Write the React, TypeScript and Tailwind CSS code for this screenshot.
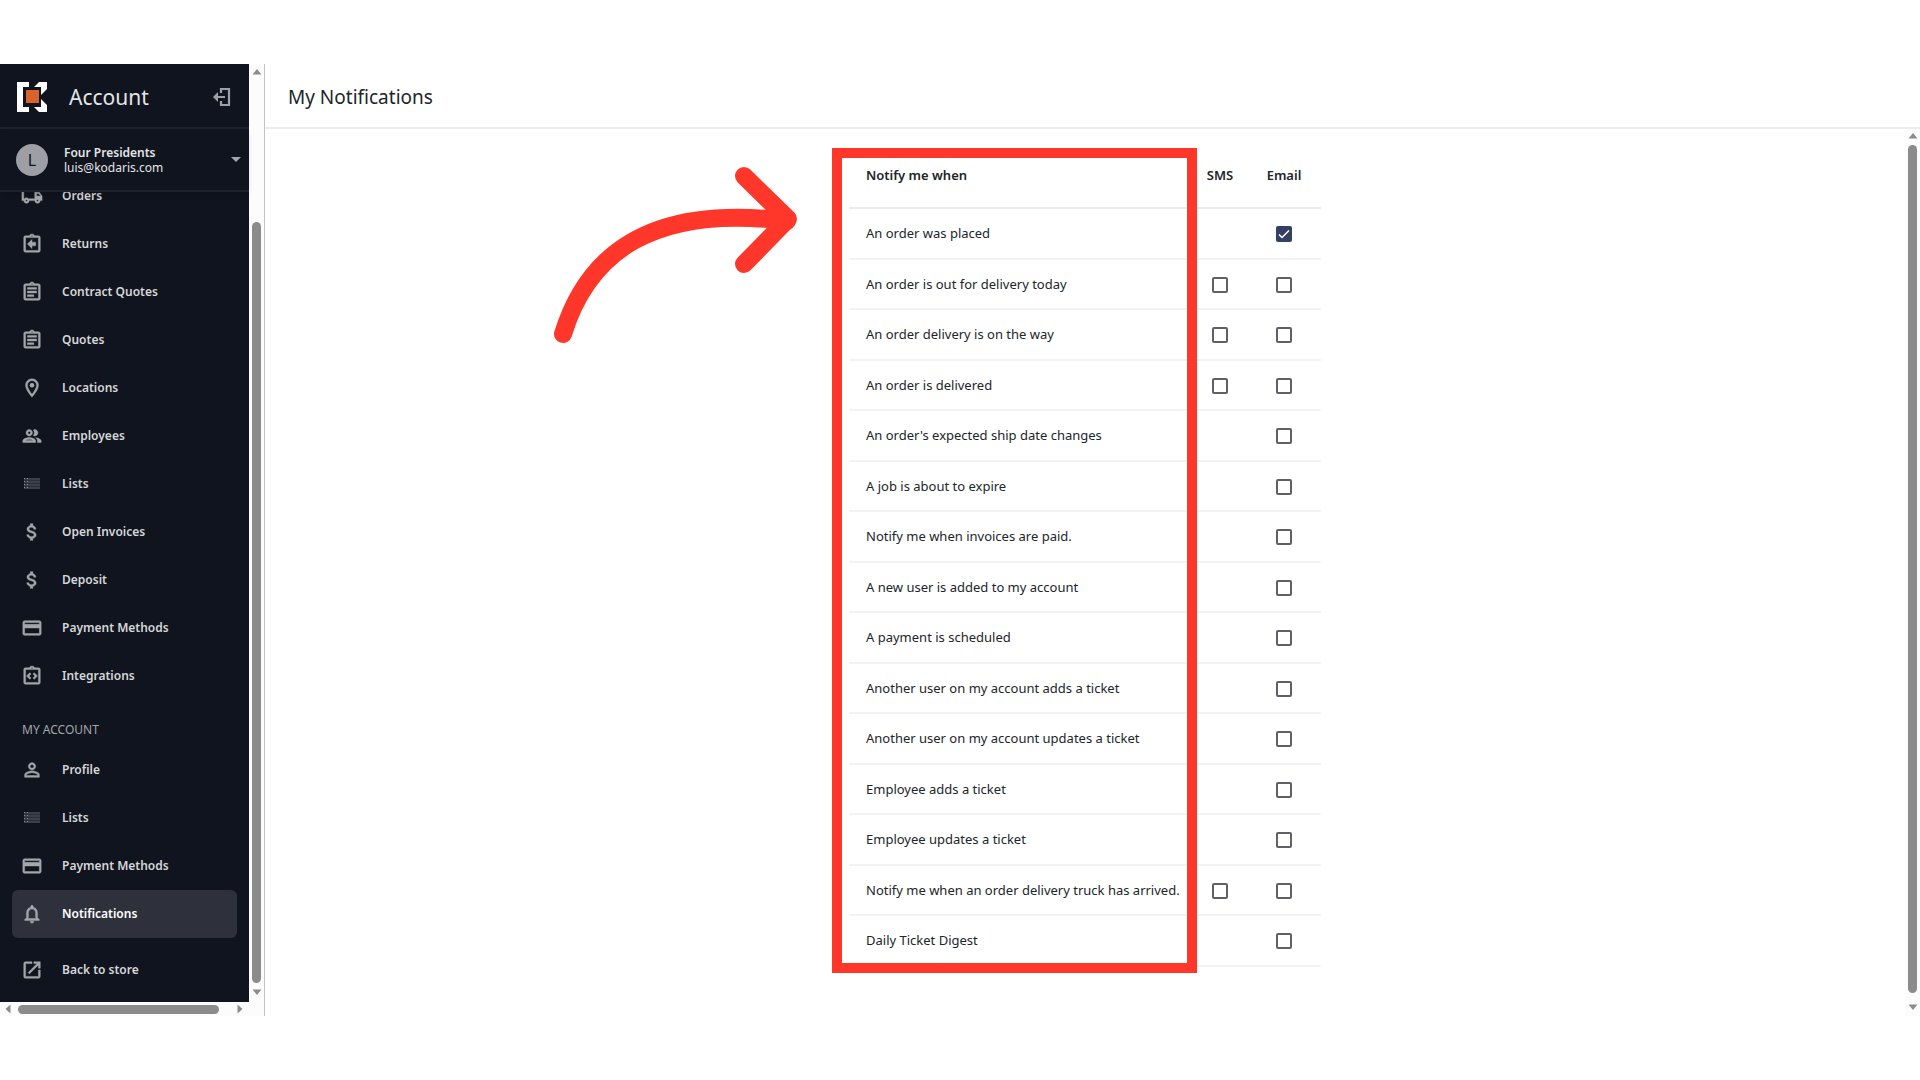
import type { IconType } from 'react-icons';
import {
  MdAttachMoney,
  MdCreditCard,
  MdNotificationsNone,
  MdOpenInNew,
  MdOutlineAssignment,
  MdOutlineAssignmentReturn,
  MdOutlineGroup,
  MdOutlineIntegrationInstructions,
  MdOutlineLocalShipping,
  MdOutlineLocationOn,
  MdPersonOutline,
} from 'react-icons/md';

type NavItem = { label: string; icon: IconType; active?: boolean };

function ListIcon({ className }: { className?: string }) {
  return (
    <svg viewBox="0 0 22 22" className={className} aria-hidden="true">
      <rect x="3" y="5" width="16" height="11" fill="#2a2f3a" />
      <path d="M3 6h16M3 9h16M3 12h16M3 15h16" fill="none" stroke="#4c515b" strokeWidth="1" />
      <path d="M3.5 5v11M6.5 5v11" fill="none" stroke="#8a8f96" strokeWidth="1" strokeDasharray="1 2" />
    </svg>
  );
}

const accountItems: NavItem[] = [
  { label: 'Orders', icon: MdOutlineLocalShipping },
  { label: 'Returns', icon: MdOutlineAssignmentReturn },
  { label: 'Contract Quotes', icon: MdOutlineAssignment },
  { label: 'Quotes', icon: MdOutlineAssignment },
  { label: 'Locations', icon: MdOutlineLocationOn },
  { label: 'Employees', icon: MdOutlineGroup },
  { label: 'Lists', icon: ListIcon as IconType },
  { label: 'Open Invoices', icon: MdAttachMoney },
  { label: 'Deposit', icon: MdAttachMoney },
  { label: 'Payment Methods', icon: MdCreditCard },
  { label: 'Integrations', icon: MdOutlineIntegrationInstructions },
];

const myAccountItems: NavItem[] = [
  { label: 'Profile', icon: MdPersonOutline },
  { label: 'Lists', icon: ListIcon as IconType },
  { label: 'Payment Methods', icon: MdCreditCard },
  { label: 'Notifications', icon: MdNotificationsNone, active: true },
];

const notifications = [
  { label: 'An order was placed', sms: false, email: true },
  { label: 'An order is out for delivery today', sms: true },
  { label: 'An order delivery is on the way', sms: true },
  { label: 'An order is delivered', sms: true },
  { label: "An order's expected ship date changes" },
  { label: 'A job is about to expire' },
  { label: 'Notify me when invoices are paid.' },
  { label: 'A new user is added to my account' },
  { label: 'A payment is scheduled' },
  { label: 'Another user on my account adds a ticket' },
  { label: 'Another user on my account updates a ticket' },
  { label: 'Employee adds a ticket' },
  { label: 'Employee updates a ticket' },
  { label: 'Notify me when an order delivery truck has arrived.', sms: true },
  { label: 'Daily Ticket Digest' },
];

function NavLink({ item }: { item: NavItem }) {
  const Icon = item.icon;
  return (
    <li>
      <a
        href="#"
        className={`flex h-12 items-center rounded-md pl-[9px] text-xs font-semibold ${
          item.active ? 'bg-[#2e313c] text-white' : 'text-[#d5d6d8]'
        }`}
      >
        <Icon className="mr-[19px] h-[22px] w-[22px] text-[#a3a6ab] [&_path:not([fill=none])]:[stroke-width:0.5]" />
        {item.label}
      </a>
    </li>
  );
}

function Checkbox({ labelledBy, checked }: { labelledBy: string; checked?: boolean }) {
  return (
    <span className="relative mx-auto block h-4 w-4">
      <input
        type="checkbox"
        aria-labelledby={labelledBy}
        defaultChecked={checked}
        className="peer block h-4 w-4 appearance-none rounded-xs border-2 border-[#5f6166] checked:border-[#334062] checked:bg-[#334062]"
      />
      <svg viewBox="0 0 16 16" className="pointer-events-none absolute inset-0 hidden h-4 w-4 peer-checked:block" aria-hidden="true">
        <path d="M3 8.5l3 3L13 4.500" fill="none" stroke="#fff" strokeWidth="1.5" />
      </svg>
    </span>
  );
}

function Arrow({ d }: { d: string }) {
  return (
    <svg viewBox="0 0 10 10" className="h-[10px] w-[10px] shrink-0" aria-hidden="true">
      <path d={d} fill="#8b8b8b" />
    </svg>
  );
}

const UP = 'M5 2l4.500 5.500h-9z';
const DOWN = 'M5 8l4.500-5.500h-9z';
const LEFT = 'M2.500 5l5-4.500v9z';
const RIGHT = 'M7.500 5l-5-4.500v9z';

export default function App() {
  return (
    <div className="bg-white py-16 font-['Noto_Sans',sans-serif] text-[#212529]">
      <div className="flex">
        {/* Sidebar */}
        <div className="w-[249px] shrink-0">
          <aside className="bg-[#10141e]">
            <div className="flex h-[65px] items-center border-b-2 border-[#1e222c] pl-[17px] pr-[18px] pt-0.5">
              <svg viewBox="0 0 30 30" className="h-[30px] w-[30px]" aria-hidden="true">
                <path d="M0 0h12v5H6v20h6v5H0zM17 5l5-5h8v7l-6 6v-8zM24 17l6 6v7h-8l-5-5h7z" fill="#fff" />
                <rect x="9" y="8" width="13" height="13" fill="#d9632d" />
              </svg>
              <h2 className="ml-[22px] flex-1 pt-0.5 text-[21px] text-[#e3e4e6]">Account</h2>
              <button type="button" aria-label="Sign out">
                <svg viewBox="0 0 18 18" className="h-[18px] w-[18px]" aria-hidden="true">
                  <path d="M8 5V1h8v16H8v-4M12 9H4" fill="none" stroke="#9da0a6" strokeWidth="2.2" />
                  <path d="M0 9l5-5v10z" fill="#9da0a6" />
                </svg>
              </button>
            </div>
            <button
              type="button"
              className="relative flex h-[63px] w-full items-center border-b-2 border-[#1e222c] pl-4 pr-2 text-left shadow-md"
            >
              <span className="flex h-8 w-8 items-center justify-center rounded-full bg-[#9e9ea5] text-base text-[#10141e]">L</span>
              <span className="ml-4 flex-1 text-xs leading-[15px] text-[#e3e4e6]">
                <span className="block font-semibold">Four Presidents</span>
                <span className="block">luis@kodaris.com</span>
              </span>
              <svg viewBox="0 0 10 5" className="h-[5px] w-[10px]" aria-hidden="true">
                <path d="M0 0h10L5 5z" fill="#a3a6ab" />
              </svg>
            </button>
            <nav className="overflow-hidden px-3 pb-2">
              <ul className="-mt-5">
                {accountItems.map((item) => (
                  <NavLink key={item.label} item={item} />
                ))}
              </ul>
              <h3 className="px-[10px] pb-1.5 pt-5 text-xs leading-5 text-[#a3a6ab]">MY ACCOUNT</h3>
              <ul>
                {myAccountItems.map((item) => (
                  <NavLink key={item.label} item={item} />
                ))}
              </ul>
              <ul className="mt-2">
                <NavLink item={{ label: 'Back to store', icon: MdOpenInNew }} />
              </ul>
            </nav>
          </aside>
          <div className="flex h-[14px] items-center bg-[#fcfcfc] pl-[3px] pr-1">
            <Arrow d={LEFT} />
            <div className="ml-[5px] mr-4 h-[9px] flex-1 rounded-full bg-[#8b8b8b]" />
            <Arrow d={RIGHT} />
          </div>
        </div>
        <div className="flex w-[15px] shrink-0 flex-col items-center bg-[#fcfcfc] pb-[19px] pt-[3px]">
          <Arrow d={UP} />
          <div className="mb-1 mt-[145px] w-[9px] flex-1 rounded-full bg-[#8b8b8b]" />
          <Arrow d={DOWN} />
        </div>

        {/* Content */}
        <main className="flex min-w-0 flex-1 flex-col border-l border-[#c4c4c4]">
          <header className="flex h-[65px] items-center border-b-2 border-[#ededed] pl-[23px] pt-1">
            <h1 className="text-[19px]">My Notifications</h1>
          </header>
          <div className="flex flex-1">
            <div className="flex-1 pt-[15px]">
              <div className="relative mx-auto w-[472px]">
                <table className="w-full table-fixed border-collapse text-[13px]">
                  <thead>
                    <tr className="h-16 border-b-2 border-[#ececec]">
                      <th className="pl-[17px] text-left font-semibold">Notify me when</th>
                      <th id="col-sms" className="w-16 text-center font-semibold">SMS</th>
                      <th id="col-email" className="w-[69px] pr-[5px] text-center font-semibold">Email</th>
                    </tr>
                  </thead>
                  <tbody>
                    {notifications.map((row, index) => (
                      <tr key={row.label} className="h-[50px] border-b-2 border-[#f3f3f3] odd:h-[51px]">
                        <td id={`row-${index}`} className="whitespace-nowrap pl-[17px] pt-px">{row.label}</td>
                        <td className="pt-px">{row.sms && <Checkbox labelledBy={`row-${index} col-sms`} />}</td>
                        <td className="pr-[5px] pt-px">
                          <Checkbox labelledBy={`row-${index} col-email`} checked={row.email} />
                        </td>
                      </tr>
                    ))}
                  </tbody>
                </table>

                {/* Callout */}
                <div className="pointer-events-none absolute -left-[17px] top-1 h-[825px] w-[365px] border-10 border-[#ff372b]" />
                <svg
                  viewBox="552 160 248 188"
                  className="pointer-events-none absolute -left-[297px] top-4 h-[188px] w-[248px]"
                  fill="none"
                  stroke="#ff372b"
                  strokeWidth="18"
                  strokeLinecap="round"
                  strokeLinejoin="round"
                  aria-hidden="true"
                >
                  <path d="M563 334C588 253 652 204 787 221" />
                  <path d="M744 176L788 219L744 264" />
                </svg>
              </div>
            </div>
            <div className="flex w-[15px] flex-col items-center bg-[#fcfcfc] pb-1 pt-0.5">
              <Arrow d={UP} />
              <div className="mb-[9px] mt-1 w-[9px] flex-1 rounded-full bg-[#8b8b8b]" />
              <Arrow d={DOWN} />
            </div>
          </div>
        </main>
      </div>
    </div>
  );
}
